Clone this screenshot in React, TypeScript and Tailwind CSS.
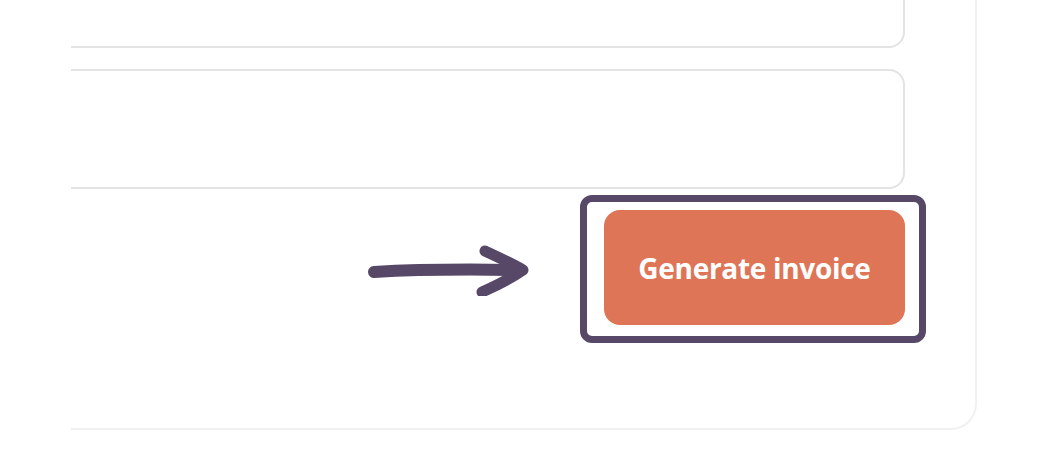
export default function App() {
  return (
    <div className="h-[474px] w-[1062px] overflow-hidden bg-white pl-[71px] font-['Open_Sans',sans-serif]">
      <div className="-mt-[30px] w-[906px] rounded-br-[26px] border-r-2 border-b-2 border-[#f1f1f1] pb-[103px] pr-[70px]">
        <div className="flex flex-col gap-[21px]">
          <div className="h-[78px] rounded-br-[16px] border-r-2 border-b-2 border-[#e3e3e3]" />
          <div className="h-[120px] rounded-r-[16px] border-y-2 border-r-2 border-[#e3e3e3]" />
        </div>
        <div className="mt-[21px] flex items-center justify-end">
          <div className="relative">
            {/* annotation: arrow and outline */}
            <svg
              className="absolute top-[34px] -left-[236px]"
              width="164"
              height="52"
              viewBox="0 0 164 52"
              fill="none"
            >
              <path
                d="M6 28 C40 26 90 25 150 26"
                stroke="#574868"
                strokeWidth="12"
                strokeLinecap="round"
              />
              <path
                d="M117 7 C132 14 145 20 155 26 C145 33 130 41 114 48"
                stroke="#574868"
                strokeWidth="11"
                strokeLinecap="round"
                strokeLinejoin="round"
              />
            </svg>
            <div className="absolute -top-[15px] -right-[21px] -bottom-[18px] -left-[24px] rounded-[12px] border-[7px] border-[#574868]" />
            <button className="flex h-[115px] w-[301px] items-center justify-center rounded-[16px] bg-[#de7557] text-[28px] font-bold tracking-[-0.3px] text-white">
              Generate invoice
            </button>
          </div>
        </div>
      </div>
    </div>
  );
}
